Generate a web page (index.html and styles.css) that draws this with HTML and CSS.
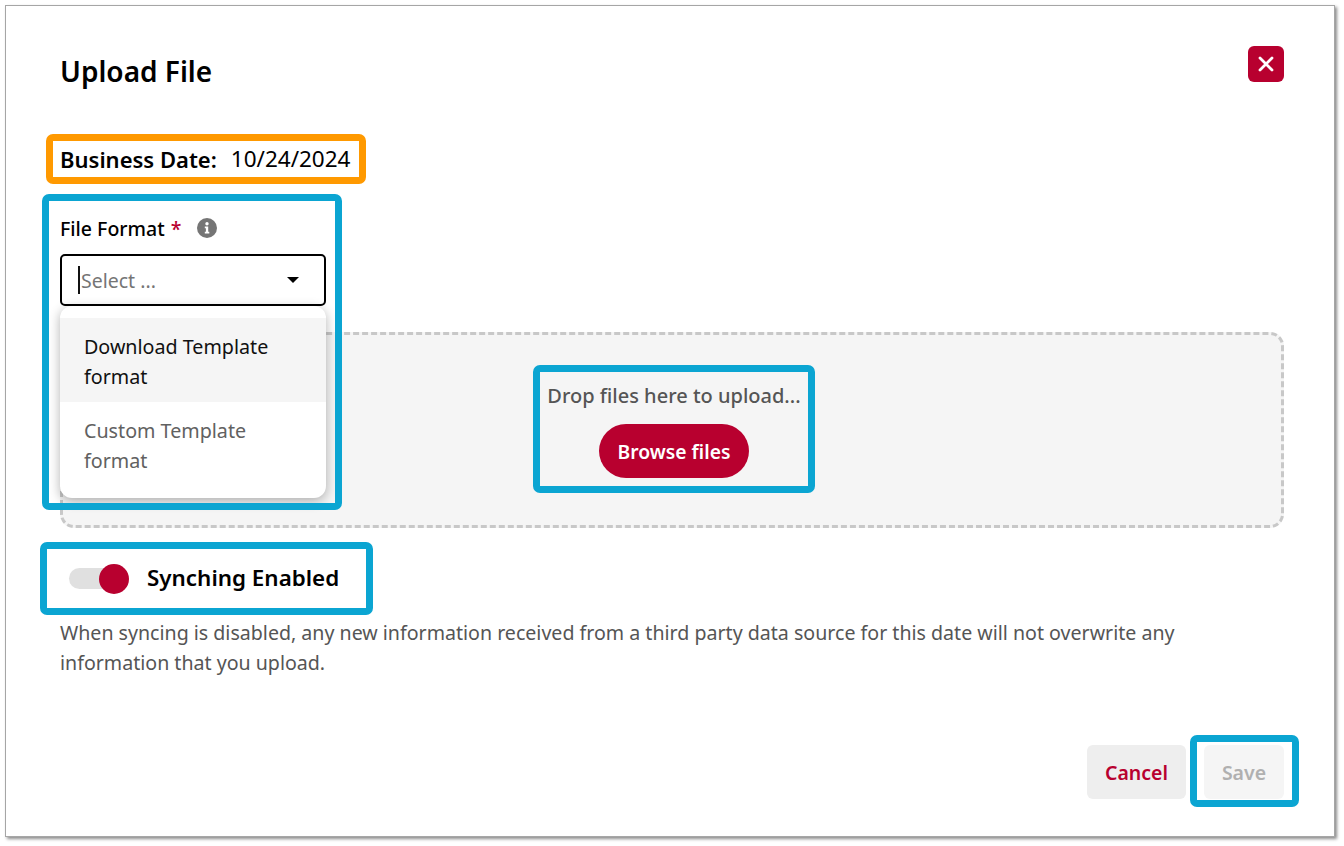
FILE: index.html
```html
<!DOCTYPE html>
<html lang="en">
<head>
  <meta charset="UTF-8">
  <title>Upload File</title>
  <link rel="stylesheet" href="styles.css">
</head>
<body>
  <div class="dialog">
    <div class="dialog-header">
      <h1>Upload File</h1>
      <button class="close-button" aria-label="Close">
        <svg width="16" height="16" viewBox="0 0 16 16"><path d="M2 2 14 14M14 2 2 14" stroke="#fff" stroke-width="2.8" stroke-linecap="round"/></svg>
      </button>
    </div>

    <div class="business-date mark mark-orange">
      <strong>Business Date:</strong>
      <span>10/24/2024</span>
    </div>

    <div class="format-field mark">
      <div class="field-label">
        <span>File Format</span>
        <span class="required">*</span>
        <svg class="info-icon" width="20" height="20" viewBox="0 0 20 20"><circle cx="10" cy="10" r="10" fill="#757575"/><circle cx="10" cy="5.8" r="1.7" fill="#fff"/><path d="M7.8 8.6h3.4v5.2h1.1v1.6H7.8v-1.6h1.1v-3.6H7.8z" fill="#fff"/></svg>
      </div>
      <div class="select-box">
        <span class="caret"></span>
        <span class="placeholder">Select ...</span>
        <span class="select-arrow"></span>
      </div>
      <ul class="select-menu">
        <li class="active">Download Template format</li>
        <li>Custom Template format</li>
      </ul>
    </div>

    <div class="drop-zone">
      <div class="drop-inner mark">
        <p>Drop files here to upload...</p>
        <button class="browse-button">Browse files</button>
      </div>
    </div>

    <div class="sync-row mark">
      <span class="toggle"><span class="toggle-knob"></span></span>
      <span class="sync-label">Synching Enabled</span>
    </div>
    <p class="sync-note">When syncing is disabled, any new information received from a third party data source for this date will not overwrite any information that you upload.</p>

    <div class="dialog-footer">
      <button class="cancel-button">Cancel</button>
      <button class="save-button mark" disabled>Save</button>
    </div>
  </div>
</body>
</html>
```

FILE: styles.css
```css
* {
  box-sizing: border-box;
}
body {
  margin: 0;
  height: 846px;
  overflow: hidden;
  background-color: #fff;
  font-family: "Noto Sans", "Open Sans", sans-serif;
  color: #000;
}
button {
  font-family: inherit;
  border: none;
  cursor: pointer;
}
.dialog {
  width: 1330px;
  height: 832px;
  margin: 5px;
  padding: 0 50px 0 54px;
  background: #fff;
  border: 1px solid #a6a6a6;
  box-shadow: 2px 2px 3px rgba(0, 0, 0, 0.45);
}
.dialog-header {
  display: flex;
  justify-content: space-between;
  align-items: flex-start;
  height: 135px;
  padding-top: 40px;
}
.dialog-header h1 {
  margin: 7px 0 0;
  font-size: 28px;
  line-height: 36px;
  font-weight: 600;
}
.close-button {
  display: flex;
  align-items: center;
  justify-content: center;
  width: 36px;
  height: 36px;
  padding: 0;
  border-radius: 6px;
  background-color: #b8002f;
}

/* Highlight frames drawn round the elements */
.mark {
  position: relative;
}
.mark::after {
  content: "";
  position: absolute;
  border: 7px solid #0ba5d2;
  border-radius: 7px;
  pointer-events: none;
  z-index: 5;
}

.business-date {
  display: flex;
  gap: 14px;
  width: 292px;
  height: 36px;
  font-size: 22px;
  line-height: 36px;
  white-space: nowrap;
}
.business-date strong {
  font-weight: 600;
}
.business-date span {
  font-size: 22.5px;
}
.business-date::after {
  border-color: #ff9900;
  inset: -7px -14px -7px -14px;
}

.format-field {
  width: 266px;
  height: 92px;
  margin-top: 37px;
}
.format-field::after {
  inset: -20px -16px -204px -18px;
}
.field-label {
  display: flex;
  align-items: center;
  height: 28px;
  font-size: 19.5px;
  font-weight: 500;
  white-space: nowrap;
}
.required {
  margin-left: 6px;
  color: #b8002f;
}
.info-icon {
  margin-left: 16px;
}
.select-box {
  display: flex;
  align-items: center;
  height: 52px;
  margin-top: 12px;
  padding: 0 25px 0 16px;
  border: 2.5px solid #000;
  border-radius: 5px;
  background: #fff;
}
.caret {
  width: 2px;
  height: 28px;
  margin-right: 1px;
  background-color: #111;
}
.placeholder {
  flex: 1;
  font-size: 19.5px;
  color: #757575;
}
.select-arrow {
  width: 0;
  height: 0;
  border-left: 6.5px solid transparent;
  border-right: 6.5px solid transparent;
  border-top: 6.5px solid #000;
}
.select-menu {
  position: absolute;
  top: 92px;
  left: 0;
  z-index: 3;
  width: 266px;
  height: 192px;
  margin: 0;
  padding: 12px 0 0;
  list-style: none;
  background: #fff;
  border-radius: 12px;
  box-shadow: 0 3px 12px rgba(0, 0, 0, 0.3);
  font-size: 19.7px;
  line-height: 30px;
  color: #616161;
}
.select-menu li {
  height: 84px;
  padding: 14px 40px 10px 24px;
}
.select-menu .active {
  background-color: #f5f5f5;
  color: #111;
}

.drop-zone {
  display: flex;
  align-items: center;
  justify-content: center;
  height: 196px;
  margin-top: 26px;
  background-color: #f5f5f5;
  border: 3px dashed #c8c8c8;
  border-radius: 14px;
}
.drop-inner {
  display: flex;
  flex-direction: column;
  align-items: center;
  width: 268px;
  height: 114px;
  margin: 0 0 2px 4px;
  padding-top: 9px;
}
.drop-inner::after {
  inset: -7px;
}
.drop-inner p {
  margin: 0;
  font-size: 20px;
  line-height: 30px;
  font-weight: 500;
  color: #555;
  white-space: nowrap;
}
.browse-button {
  width: 150px;
  height: 54px;
  margin-top: 13px;
  border-radius: 27px;
  background-color: #b8002f;
  color: #fff;
  font-size: 19.3px;
  font-weight: 600;
}

.sync-row {
  display: flex;
  align-items: center;
  width: 319px;
  height: 59px;
  margin-top: 21px;
  margin-left: -13px;
  padding-left: 22px;
}
.sync-row::after {
  inset: -7px;
}
.toggle {
  position: relative;
  width: 50px;
  height: 21px;
  border-radius: 11px;
  background-color: #e0e0e0;
}
.toggle-knob {
  position: absolute;
  top: -4px;
  right: -10px;
  width: 30px;
  height: 30px;
  border-radius: 50%;
  background-color: #b8002f;
}
.sync-label {
  margin-left: 28px;
  margin-bottom: 2px;
  font-size: 22.4px;
  font-weight: 600;
  white-space: nowrap;
}
.sync-note {
  max-width: 1140px;
  margin: 10px 0 0;
  font-size: 19.6px;
  line-height: 30px;
  color: #555;
}

.dialog-footer {
  display: flex;
  justify-content: flex-end;
  gap: 18px;
  margin-top: 67px;
}
.dialog-footer button {
  height: 54px;
  border-radius: 6px;
  font-size: 19.5px;
  font-weight: 600;
}
.cancel-button {
  width: 99px;
  background-color: #eeeeee;
  color: #b8002f;
}
.save-button {
  width: 80px;
  background-color: #f5f5f5;
  color: #b0b0b0;
}
.save-button::after {
  inset: -10px -15px -8px -14px;
}
```
